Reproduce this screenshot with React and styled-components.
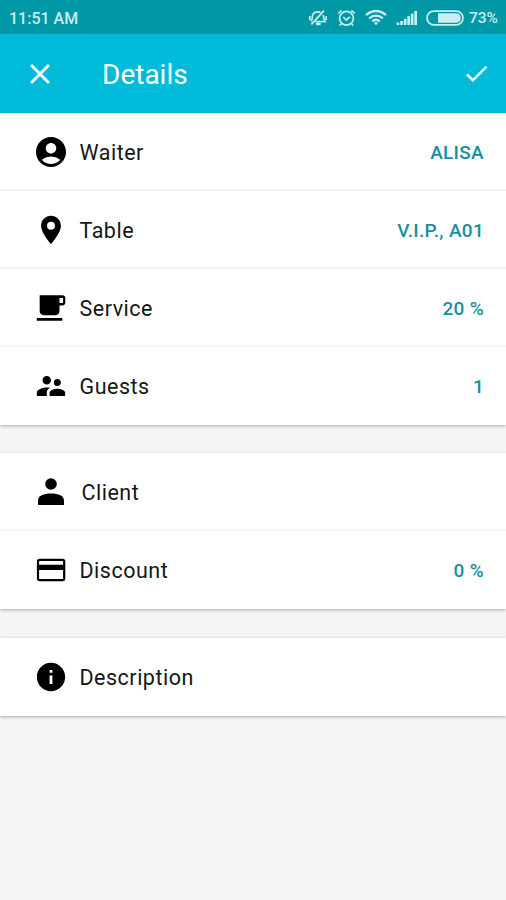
import React from "react";
import styled, { createGlobalStyle } from "styled-components";
import {
  MdAccountCircle,
  MdCheck,
  MdClose,
  MdInfo,
  MdSupervisorAccount,
} from "react-icons/md";

function PlaceIcon({ size }) {
  return (
    <svg width={size} height={size} viewBox="0 0 24 24" fill="currentColor" fillRule="evenodd">
      <path d="M12 2C8.13 2 5 5.13 5 9c0 5.25 7 13 7 13s7-7.75 7-13c0-3.87-3.13-7-7-7zm0 9.8a2.8 2.8 0 1 1 0-5.6 2.8 2.8 0 0 1 0 5.6z" />
    </svg>
  );
}

function CupIcon({ size }) {
  return (
    <svg width={size} height={size} viewBox="0 0 24 24" fill="currentColor">
      <path d="M20.2 3H4v11C4 16 5.2 17.2 7.2 17.2h7.6c2 0 3.2-1.2 3.2-3.2V10.2h2.2c1.2 0 1.9-.8 1.9-2V5c0-1.2-.7-2-1.9-2zm.3 5.4H18V4.9h2.5v3.5zM2 21h18v-2H2v2z" />
    </svg>
  );
}

function PersonIcon({ size }) {
  return (
    <svg width={size} height={size} viewBox="0 0 34 34" fill="currentColor">
      <circle cx="17" cy="9" r="5.8" />
      <path d="M4 30V25.8C4 21 9.5 18.6 17 18.6S30 21 30 25.8V30Z" />
    </svg>
  );
}

function CardIcon({ size }) {
  return (
    <svg width={size} height={size} viewBox="0 0 34 34" fill="none" stroke="currentColor">
      <rect x="4" y="6.9" width="26.2" height="20.2" rx="1.6" strokeWidth="2.2" />
      <path d="M4 14.4H30" strokeWidth="5.2" />
    </svg>
  );
}

const groups = [
  [
    { icon: MdAccountCircle, size: 36, label: "Waiter", value: "ALISA" },
    { icon: PlaceIcon, size: 34, label: "Table", value: "V.I.P., A01" },
    { icon: CupIcon, size: 34, label: "Service", value: "20 %" },
    { icon: MdSupervisorAccount, size: 34, label: "Guests", value: "1" },
  ],
  [
    { icon: PersonIcon, size: 34, label: "Client", indent: 2 },
    { icon: CardIcon, size: 34, label: "Discount", value: "0 %" },
  ],
  [{ icon: MdInfo, size: 34, label: "Description" }],
];

function MutedBell() {
  return (
    <svg width="20" height="18" viewBox="0 0 20 18" fill="none" stroke="currentColor" strokeWidth="1.7">
      <path d="M3.2 12.4C4.6 10.6 4 8.6 4.5 6.6C5.2 4 7.3 2.8 10 2.8C11 2.8 11.9 3 12.6 3.5" />
      <path d="M15.2 6C15.8 8.4 15.6 10.4 17 12.6H7.5" />
      <path d="M3.4 15.4L16 1.6" />
      <path d="M8 15H12.6" strokeWidth="2.4" />
      <path d="M1.8 7V11.2M18.2 7V11.2" />
    </svg>
  );
}

function AlarmClock() {
  return (
    <svg width="19" height="18" viewBox="0 0 19 18" fill="none" stroke="currentColor" strokeWidth="1.7">
      <circle cx="9.5" cy="9.3" r="6.9" />
      <path d="M1.3 4.3L4.6 1.4M14.4 1.4L17.7 4.3M4.2 14.8L2.8 16.6M14.8 14.8L16.2 16.6" />
      <path d="M6.2 8L9.3 11L12.8 7.8" />
    </svg>
  );
}

function Wifi() {
  return (
    <svg width="22" height="17" viewBox="0 0 22 17" fill="none" stroke="currentColor" strokeWidth="2.3">
      <path d="M1 6.2C6.8 .6 15.2 .6 21 6.2" />
      <path d="M4.2 9.4C8.2 5.7 13.8 5.7 17.8 9.4" />
      <path d="M7.2 12.4C9.6 10.3 12.4 10.3 14.8 12.4" />
      <path d="M8.8 13.7L11 16.2L13.2 13.7C12 12.8 10 12.8 8.8 13.7Z" fill="currentColor" stroke="none" />
    </svg>
  );
}

function Signal() {
  return (
    <svg width="21" height="15" viewBox="0 0 21 15" fill="currentColor">
      <rect x="0.6" y="12.5" width="2.6" height="2.5" />
      <rect x="4.2" y="11" width="2.7" height="4" />
      <rect x="7.8" y="8.8" width="2.7" height="6.2" />
      <rect x="11.3" y="6.2" width="2.7" height="8.8" />
      <rect x="14.8" y="3.6" width="2.7" height="11.4" />
      <rect x="18.3" y="1" width="2.7" height="14" />
    </svg>
  );
}

function Battery() {
  return (
    <svg width="38" height="16" viewBox="0 0 38 16" fill="none" stroke="currentColor">
      <rect x="1" y="1.2" width="36" height="13.6" rx="6.8" strokeWidth="1.7" />
      <path d="M12 3.2H30A4.8 4.8 0 0 1 30 12.8H12Z" fill="currentColor" stroke="none" />
    </svg>
  );
}

export default function App() {
  return (
    <>
      <GlobalStyle />
      <Screen>
        <StatusBar>
          <Clock>11:51 AM</Clock>
          <Indicators>
            <MutedBell />
            <AlarmClock />
            <Wifi />
            <Signal />
            <Battery />
            <Percent>73%</Percent>
          </Indicators>
        </StatusBar>
        <AppBar>
          <IconButton aria-label="Close">
            <MdClose size={34} />
          </IconButton>
          <Title>Details</Title>
          <IconButton aria-label="Save">
            <MdCheck size={29} />
          </IconButton>
        </AppBar>
        <Groups>
          {groups.map((rows) => (
            <Card key={rows[0].label}>
              {rows.map(({ icon: Icon, size, label, value, indent }) => (
                <Row key={label}>
                  <IconSlot>
                    <Icon size={size} />
                  </IconSlot>
                  <Label $indent={indent}>{label}</Label>
                  {value && <Value>{value}</Value>}
                </Row>
              ))}
            </Card>
          ))}
        </Groups>
      </Screen>
    </>
  );
}

const GlobalStyle = createGlobalStyle`
  * {
    box-sizing: border-box;
  }
  body {
    margin: 0;
    background: #f4f4f4;
    font-family: Roboto, sans-serif;
  }
`;

const Screen = styled.div`
  min-height: 100vh;
  background: #f4f4f4;
`;

const StatusBar = styled.div`
  display: flex;
  align-items: center;
  justify-content: space-between;
  height: 34px;
  padding: 1px 8px 0 9px;
  background: #0097a7;
  color: #c9eef2;
`;

const Clock = styled.span`
  padding-top: 1px;
  font-size: 16px;
  font-weight: 500;
`;

const Indicators = styled.div`
  display: flex;
  align-items: center;
  gap: 9px;
`;

const Percent = styled.span`
  margin-left: -4px;
  font-size: 15.5px;
  font-weight: 500;
`;

const AppBar = styled.header`
  display: flex;
  align-items: center;
  height: 79px;
  padding: 0 15px 0 23px;
  background: #00bcda;
  color: #fff;
`;

const IconButton = styled.button`
  display: flex;
  padding: 0;
  border: 0;
  background: none;
  color: inherit;
`;

const Title = styled.h1`
  flex: 1;
  margin: 0 0 0 45px;
  padding-top: 3px;
  font-size: 28px;
  font-weight: 400;
  line-height: 1;
`;

const Groups = styled.main`
  display: flex;
  flex-direction: column;
  gap: 28px;
`;

const Card = styled.section`
  background: #fff;
  box-shadow: 0 1px 3px rgba(0, 0, 0, 0.3);

  &:last-child {
    margin-top: 1px;
  }
`;

const Row = styled.div`
  display: flex;
  align-items: center;
  height: 78px;
  padding: 0 22px 0 31px;
  & + & {
    box-shadow: 0 -1px 0 1px #f0f0f0;
    clip-path: inset(-1.5px 0 0 0);
  }
`;

const IconSlot = styled.span`
  display: flex;
  justify-content: center;
  width: 40px;
  color: #000;
`;

const Label = styled.span`
  flex: 1;
  margin-left: ${({ $indent = 0 }) => 8.5 + $indent}px;
  font-size: 21.5px;
  letter-spacing: 0.5px;
  color: #161616;
`;

const Value = styled.span`
  font-size: 19px;
  font-weight: 500;
  letter-spacing: 0.3px;
  color: #168fa0;
`;
